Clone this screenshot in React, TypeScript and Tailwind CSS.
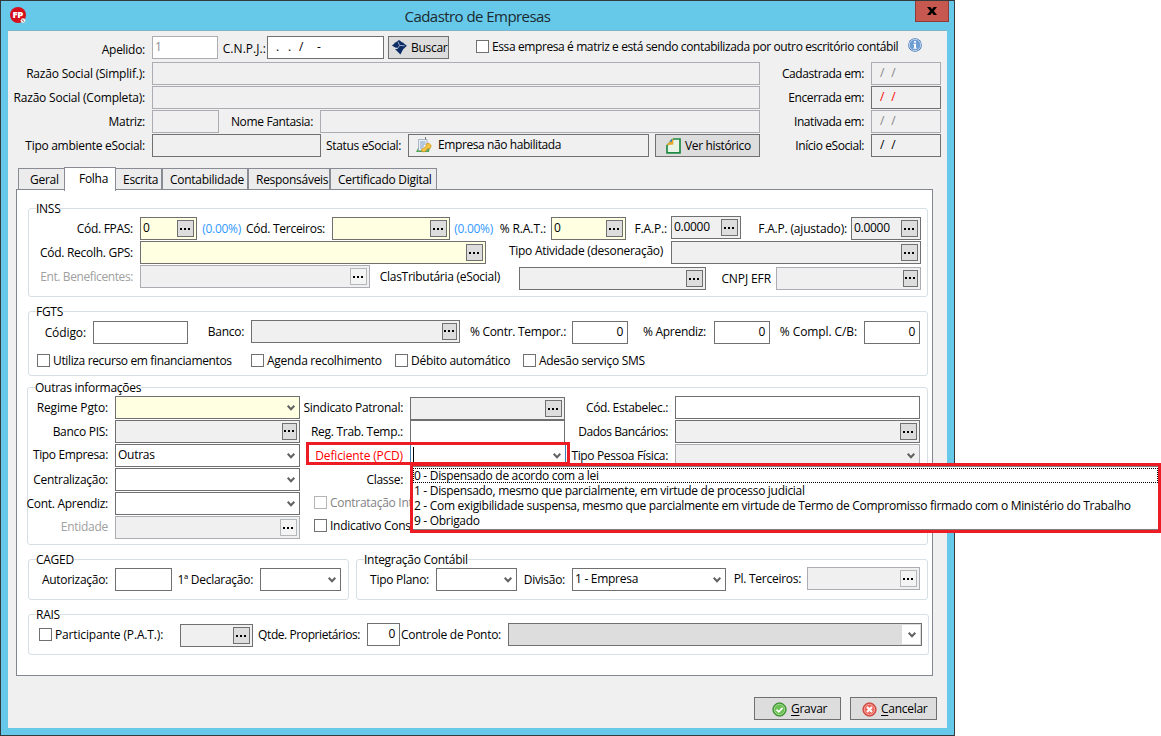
import type { ReactNode } from "react";
import clsx from "clsx";

const TABS = [
  { label: "Geral", className: "w-[47px] pl-[11px]" },
  { label: "Folha", className: "w-[52px] pl-[14px]", active: true },
  { label: "Escrita", className: "w-[47px] pl-[7px]" },
  { label: "Contabilidade", className: "w-[86px] pl-[7px]" },
  { label: "Responsáveis", className: "w-[82px] pl-[7px]" },
  { label: "Certificado Digital", className: "w-[107px] pl-[7px]" },
];

const PCD_OPTIONS = [
  "0 - Dispensado de acordo com a lei",
  "1 - Dispensado, mesmo que parcialmente, em virtude de processo judicial",
  "2 - Com exigibilidade suspensa, mesmo que parcialmente em virtude de Termo de Compromisso firmado com o Ministério do Trabalho",
  "9 - Obrigado",
];

export default function App() {
  return (
    <div className="relative h-[736px] w-[1161px] overflow-hidden bg-white font-['Open_Sans','Noto_Sans',sans-serif] text-[12px] tracking-[-0.28px] text-black">
      <div className="flex h-[736px] w-[955px] flex-col border border-[#34393c] bg-[#66c9ea]">
        <TitleBar />
        <main className="mx-[7px] flex h-[698px] flex-col border-t border-[#7fb4ca] bg-[#f0f0f0]">
          <CompanyHeader />
          <Tabs />
          <div className="relative ml-2 flex h-[487px] w-[917px] flex-col border border-[#828790] bg-white">
            <InssGroup />
            <FgtsGroup />
            <OtherInfoGroup />
            <div className="mt-[14px] ml-[11px] flex gap-[7px]">
              <CagedGroup />
              <IntegrationGroup />
            </div>
            <RaisGroup />
          </div>
          <footer className="mt-[21px] flex justify-end gap-[9px] pr-[10px]">
            <Button className="w-[87px] gap-[4px] pl-[17px]">
              <StatusIcon ok />
              <span><u className="underline-offset-2">G</u>ravar</span>
            </Button>
            <Button className="w-[87px] gap-[4px] pl-[11px]">
              <StatusIcon />
              <span><u className="underline-offset-2">C</u>ancelar</span>
            </Button>
          </footer>
        </main>
      </div>
      <PcdHighlight />
    </div>
  );
}

function TitleBar() {
  return (
    <header className="flex h-[29px] shrink-0 items-start">
      <div className="mt-[6px] ml-[9px] w-4">
        <AppIcon />
      </div>
      <h1 className="mt-[5px] flex-1 pl-[14px] text-center text-[15px] leading-5 tracking-[-0.55px] text-[#1c2a30]">
        Cadastro de Empresas
      </h1>
      <button
        type="button"
        aria-label="Fechar"
        className="mr-[5px] flex h-[21px] w-[34px] items-center justify-center border border-t-0 border-[#8e3a3a] bg-[#c75850]"
      >
        <svg width="10" height="8" viewBox="0 0 10 8">
          <path d="M0 0h3.4L5 2.3 6.6 0H10L6.8 4 10 8H6.6L5 5.7 3.4 8H0l3.2-4z" />
        </svg>
      </button>
    </header>
  );
}

function CompanyHeader() {
  return (
    <section className="flex h-[136px] flex-col pt-[5px]">
      <div className="flex h-[26px]">
        <Label className="mt-[2px] w-[144px]">Apelido:</Label>
        <Field className="w-[66px] text-[#8d8d8d]" border="light">1</Field>
        <Label className="mt-px w-[49px] !pr-[1px] tracking-[0.05px]">C.N.P.J.:</Label>
        <Field className="w-[117px]">
          <span className="flex pl-[6px]">
            <span className="w-3">.</span>
            <span className="w-[11px]">.</span>
            <span className="w-[18px]">/</span>
            <span>-</span>
          </span>
        </Field>
        <Button className="ml-1 w-[61px] gap-[4px] pl-[3px]">
          <SearchIcon />
          Buscar
        </Button>
        <Check className="mt-[4px] ml-[27px] w-[432px] tracking-[-0.395px]">
          Essa empresa é matriz e está sendo contabilizada por outro escritório contábil
        </Check>
        <div className="mt-[2px]">
          <InfoIcon />
        </div>
      </div>
      <div className="flex">
        <div className="flex w-[752px] flex-col gap-px">
          <div className="flex">
            <Label className="w-[144px] tracking-[-0.2px]">Razão Social (Simplif.):</Label>
            <Field className="flex-1" border="light" fill="gray" />
          </div>
          <div className="flex">
            <Label className="w-[144px] tracking-[-0.2px]">Razão Social (Completa):</Label>
            <Field className="flex-1" border="light" fill="gray" />
          </div>
          <div className="flex">
            <Label className="w-[144px]">Matriz:</Label>
            <Field className="w-[67px]" border="light" fill="gray" />
            <Label className="w-[101px] tracking-[-0.35px]">Nome Fantasia:</Label>
            <Field className="flex-1" border="light" fill="gray" />
          </div>
          <div className="flex">
            <Label className="w-[144px]">Tipo ambiente eSocial:</Label>
            <Field className="w-[169px]" fill="gray" />
            <Label className="w-[87px] tracking-[-0.35px]">Status eSocial:</Label>
            <Field className="w-[241px]" fill="gray">
              <span className="flex gap-[6px] pl-[5px] tracking-[-0.41px]">
                <ReportIcon />
                Empresa não habilitada
              </span>
            </Field>
            <Button className="ml-[6px] w-[105px] gap-[4px] pl-[10px] tracking-[-0.36px]">
              <SheetIcon />
              Ver histórico
            </Button>
          </div>
        </div>
        <div className="flex w-[181px] flex-col gap-px">
          <DateRow label="Cadastrada em:" border="light" className="h-[23px] text-[#858585]" />
          <DateRow label="Encerrada em:" className="h-[21px] text-[#f00]" />
          <DateRow label="Inativada em:" border="light" className="h-[23px] text-[#858585]" />
          <DateRow label="Início eSocial:" className="h-[23px]" />
        </div>
      </div>
    </section>
  );
}

function DateRow({ label, className, border }: { label: string; className?: string; border?: "light" }) {
  return (
    <div className="flex h-[23px]">
      <Label className="w-[111px] tracking-[-0.42px]">{label}</Label>
      <Field className={clsx("w-[70px]", className)} border={border} fill="gray">
        <span className="flex gap-[7px] pl-[6px]">
          <span>/</span>
          <span>/</span>
        </span>
      </Field>
    </div>
  );
}

function Tabs() {
  return (
    <nav className="z-10 -mb-[2px] ml-[10px] flex h-[24px] items-end pb-[1px]">
      {TABS.map((tab) => (
        <button
          key={tab.label}
          type="button"
          className={clsx(
            "shrink-0 border-[#8a8c95] text-left whitespace-nowrap",
            tab.className,
            tab.active
              ? "z-10 -mr-px -mb-px -ml-px h-[24px] border-x border-t bg-white pb-[2px]"
              : "mb-[1px] h-[21px] border-x border-t bg-[#ececec] pt-px",
          )}
        >
          {tab.label}
        </button>
      ))}
    </nav>
  );
}

function InssGroup() {
  return (
    <Group title="INSS" className="mt-[18px] ml-[11px] h-[89px] w-[900px]">
      <div className="flex h-6">
        <Label className="w-[111px]">Cód. FPAS:</Label>
        <Field className="w-[57px]" fill="yellow" dots>0</Field>
        <Label className="w-[44px] !pr-0 text-[#3399ff]">(0.00%)</Label>
        <Label className="w-[91px]">Cód. Terceiros:</Label>
        <Field className="w-[118px]" fill="yellow" dots />
        <Label className="w-[43px] !pr-0 text-[#3399ff]">(0.00%)</Label>
        <Label className="w-[58px] !pr-[5px] tracking-[-0.1px]">% R.A.T.:</Label>
        <Field className="w-[75px]" fill="yellow" dots>0</Field>
        <Label className="w-[45px] !pr-[4px] tracking-[-0.15px]">F.A.P.:</Label>
        <Field className="-mt-px w-[70px]" fill="gray" dots>0.0000</Field>
        <Label className="w-[110px] !pr-[4px] tracking-[-0.18px]">F.A.P. (ajustado):</Label>
        <Field className="w-[70px]" fill="gray" dots>0.0000</Field>
      </div>
      <div className="flex h-6">
        <Label className="w-[111px]">Cód. Recolh. GPS:</Label>
        <Field className="w-[346px]" fill="yellow" dots />
        <Label className="-mt-[2px] w-[185px] !pr-[8px]">Tipo Atividade (desoneração)</Label>
        <Field className="w-[250px]" fill="gray" dots />
      </div>
      <div className="flex h-6">
        <Label className="w-[111px] tracking-[-0.4px] text-[#a0a0a0]">Ent. Beneficentes:</Label>
        <Field className="w-[230px]" border="light" fill="gray" dots="light" />
        <Label className="w-[149px] !pr-[19px]">ClasTributária (eSocial)</Label>
        <Field className="mt-[2px] w-[187px]" fill="gray" dots />
        <Label className="mt-[2px] w-[70px] !pr-[5px] tracking-[-0.1px]">CNPJ EFR</Label>
        <Field className="mt-[2px] w-[145px]" border="light" fill="gray" dots="narrow" />
      </div>
    </Group>
  );
}

function FgtsGroup() {
  return (
    <Group title="FGTS" className="mt-[14px] ml-[11px] h-[65px] w-[900px]">
      <div className="flex h-6">
        <Label className="mt-px w-[64px] tracking-[-0.1px]">Código:</Label>
        <Field className="mt-px w-[95px]" />
        <Label className="w-[63px]">Banco:</Label>
        <Field className="w-[209px]" fill="gray" dots="narrow" />
        <Label className="w-[112px] !pr-[6px]">% Contr. Tempor.:</Label>
        <Field className="mt-px w-[56px] text-right">0</Field>
        <Label className="w-[86px] !pr-[8px]">% Aprendiz:</Label>
        <Field className="mt-px w-[56px] text-right">0</Field>
        <Label className="w-[94px] tracking-[-0.1px]">% Compl. C/B:</Label>
        <Field className="mt-px w-[56px] text-right">0</Field>
      </div>
      <div className="mt-[10px] ml-[8px] flex">
        <Check className="w-[214px] tracking-[-0.36px]">Utiliza recurso em financiamentos</Check>
        <Check className="w-[144px]">Agenda recolhimento</Check>
        <Check className="w-[128px]">Débito automático</Check>
        <Check>Adesão serviço SMS</Check>
      </div>
    </Group>
  );
}

function OtherInfoGroup() {
  return (
    <Group title="Outras informações" className="mt-[11px] ml-[10px] h-[158px] w-[901px]">
      <div className="flex">
        <div className="flex w-[272px] flex-col gap-px">
          <div className="flex">
            <Label className="w-[87px] tracking-[-0.15px]">Regime Pgto:</Label>
            <Field className="w-[185px]" fill="yellow" combo />
          </div>
          <div className="flex">
            <Label className="w-[87px]">Banco PIS:</Label>
            <Field className="w-[185px]" fill="gray" dots="narrow" />
          </div>
          <div className="flex h-[23px]">
            <Label className="-mt-px w-[87px] tracking-[-0.35px]">Tipo Empresa:</Label>
            <Field className="w-[185px]" combo>Outras</Field>
          </div>
          <div className="flex">
            <Label className="w-[87px]">Centralização:</Label>
            <Field className="w-[185px]" combo />
          </div>
          <div className="flex">
            <Label className="w-[87px]">Cont. Aprendiz:</Label>
            <Field className="w-[185px]" combo />
          </div>
          <div className="flex h-[23px]">
            <Label className="-mt-px w-[87px] text-[#a0a0a0]">Entidade</Label>
            <Field className="w-[185px]" border="light" fill="gray" dots="light" />
          </div>
        </div>
        <div className="flex w-[265px] flex-col gap-px">
          <div className="flex h-[23px]">
            <Label className="w-[110px]">Sindicato Patronal:</Label>
            <Field className="mt-px w-[155px]" fill="gray" dots />
          </div>
          <div className="flex">
            <Label className="w-[110px]">Reg. Trab. Temp.:</Label>
            <Field className="w-[155px]" />
          </div>
          <div className="flex">
            <Label className="w-[110px] tracking-[-0.15px] text-[#f00]">Deficiente (PCD)</Label>
            <Field className="w-[156px]" border="focus" combo>
              <span className="block h-[17px] w-px translate-y-[2px] bg-black" />
            </Field>
          </div>
          <Label className="w-[110px]">Classe:</Label>
          <Check className="mt-[4px] ml-[14px] w-[96px]" disabled>Contratação Int</Check>
          <Check className="mt-[9px] ml-[14px] w-[96px]">Indicativo Cons</Check>
        </div>
        <div className="flex w-[355px] flex-col gap-px">
          <div className="flex">
            <Label className="w-[110px] tracking-[-0.35px]">Cód. Estabelec.:</Label>
            <Field className="w-[245px]" />
          </div>
          <div className="flex">
            <Label className="w-[110px] tracking-[-0.45px]">Dados Bancários:</Label>
            <Field className="w-[245px]" fill="gray" dots />
          </div>
          <div className="flex">
            <Label className="w-[110px] tracking-[-0.35px]">Tipo Pessoa Física:</Label>
            <Field className="w-[245px]" border="light" fill="gray" combo />
          </div>
        </div>
      </div>
    </Group>
  );
}

function CagedGroup() {
  return (
    <Group title="CAGED" className="h-[41px] w-[321px]">
      <div className="flex">
        <Label className="w-[86px]">Autorização:</Label>
        <Field className="w-[57px]" />
        <Label className="w-[88px]">1ª Declaração:</Label>
        <Field className="w-[81px]" combo />
      </div>
    </Group>
  );
}

function IntegrationGroup() {
  return (
    <Group title="Integração Contábil" className="h-[41px] w-[572px]">
      <div className="flex">
        <Label className="w-[79px]">Tipo Plano:</Label>
        <Field className="w-[81px]" combo />
        <Label className="w-[55px] !pr-[7px]">Divisão:</Label>
        <Field className="w-[154px]" combo>1 - Empresa</Field>
        <Label className="-mt-px w-[81px] !pr-[6px]">Pl. Terceiros:</Label>
        <Field className="-mt-px w-[113px]" border="light" fill="gray" dots="light" />
      </div>
    </Group>
  );
}

function RaisGroup() {
  return (
    <Group title="RAIS" className="mt-[14px] ml-[11px] h-[41px] w-[901px]">
      <div className="flex">
        <Check className="mt-[5px] ml-[10px] w-[141px] tracking-[-0.15px]">Participante (P.A.T.):</Check>
        <Field className="mt-px w-[73px]" fill="gray" dots />
        <Label className="w-[114px] tracking-[-0.42px]">Qtde. Proprietários:</Label>
        <Field className="w-[33px] text-right">0</Field>
        <Label className="w-[108px]">Controle de Ponto:</Label>
        <Field className="w-[414px]" fill="dark" combo />
      </div>
    </Group>
  );
}

// red frame around the PCD combo plus its open list
function PcdHighlight() {
  return (
    <>
      <div className="pointer-events-none absolute top-[442px] left-[306px] h-[23px] w-[264px] border-[3px] border-[#ed1c24]" />
      <div className="absolute top-[463px] left-[410px] h-[70px] w-[751px] border-[3px] border-[#ed1c24] bg-white">
        <ul className="h-[64px] border-y border-[#7f7f7f] pt-px leading-[15px] tracking-[-0.305px]">
          {PCD_OPTIONS.map((option, index) => (
            <li
              key={option}
              className={clsx(
                "h-[15px] pl-px whitespace-nowrap",
                index === 0 && "outline-1 -outline-offset-1 outline-black outline-dotted",
              )}
            >
              {option}
            </li>
          ))}
        </ul>
      </div>
    </>
  );
}

function Group({ title, className, children }: { title: string; className?: string; children: ReactNode }) {
  return (
    <section className={clsx("flex shrink-0 flex-col rounded-[3px] border border-[#d5dfe5]", className)}>
      <h2 className="-mt-[8px] ml-[7px] h-4 w-fit bg-white leading-4 whitespace-nowrap">{title}</h2>
      {children}
    </section>
  );
}

function Label({ className, children }: { className?: string; children: ReactNode }) {
  return (
    <span
      className={clsx(
        "flex h-[23px] shrink-0 justify-end pr-[7px] leading-[23px] whitespace-nowrap",
        className,
      )}
    >
      {children}
    </span>
  );
}

const FILLS = {
  white: "bg-white",
  gray: "bg-[#f0f0f0]",
  yellow: "bg-[#ffffe1]",
  dark: "bg-[#dddddd]",
};

const BORDERS = {
  normal: "border-[#707070]",
  light: "border-[#abadb3]",
  focus: "border-[#3c7fb1]",
};

function Field({
  className,
  fill = "white",
  border = "normal",
  dots,
  combo,
  children,
}: {
  className?: string;
  fill?: keyof typeof FILLS;
  border?: keyof typeof BORDERS;
  dots?: boolean | "light" | "narrow";
  combo?: boolean;
  children?: ReactNode;
}) {
  return (
    <div className={clsx("flex h-[23px] shrink-0 border leading-[19px]", FILLS[fill], BORDERS[border], className)}>
      <div className="min-w-0 flex-1 pr-[4px] pl-[2px] whitespace-nowrap">{children}</div>
      {dots && (
        <button
          type="button"
          aria-label="Pesquisar"
          className={clsx(
            "mt-[2px] mr-[2px] flex h-[17px] shrink-0 gap-[2px] border",
            dots === "narrow" ? "w-[15px] pt-[6px] pl-px" : "w-[17px] pt-[7px] pl-[2px]",
            dots === "light" ? "border-[#b5b8ba] bg-[#f4f4f4]" : "border-[#707070] bg-[#dddddd]",
          )}
        >
          <i className="h-[2px] w-[2px] bg-black" />
          <i className="h-[2px] w-[2px] bg-black" />
          <i className="h-[2px] w-[2px] bg-black" />
        </button>
      )}
      {combo && (
        <span
          className={clsx(
            "my-px flex w-[18px] shrink-0 items-center justify-center pl-[2px]",
            fill === "dark" && "mr-px bg-white",
          )}
        >
          <svg width="8" height="6" viewBox="0 0 8 6" fill="none">
            <path d="M0.7 0.8L4 4.2L7.3 0.8" stroke="#606060" strokeWidth="2" />
          </svg>
        </span>
      )}
    </div>
  );
}

function Check({ className, disabled, children }: { className?: string; disabled?: boolean; children: ReactNode }) {
  return (
    <label
      className={clsx(
        "flex h-[13px] shrink-0 gap-[3px] leading-[13px] whitespace-nowrap",
        disabled && "text-[#838383]",
        className,
      )}
    >
      <span
        className={clsx("h-[13px] w-[13px] shrink-0 border bg-white", disabled ? "border-[#b5b5b5]" : "border-[#707070]")}
      />
      {children}
    </label>
  );
}

function Button({ className, children }: { className?: string; children: ReactNode }) {
  return (
    <button
      type="button"
      className={clsx(
        "flex h-[23px] shrink-0 items-center border border-[#707070] bg-[#dddddd] leading-[21px] whitespace-nowrap",
        className,
      )}
    >
      {children}
    </button>
  );
}

function AppIcon() {
  return (
    <svg width="16" height="17" viewBox="0 0 16 17">
      <circle cx="8" cy="8" r="8" fill="#d5101c" />
      <text x="7.8" y="11.4" textAnchor="middle" fontSize="9.5" fontWeight="800" letterSpacing="-0.3" fill="#fff">
        FP
      </text>
      <circle cx="13" cy="13.6" r="2.4" fill="#eee" />
      <path d="M11.6 12.3l2.6 2.4" stroke="#a33" strokeWidth="0.9" />
    </svg>
  );
}

function SearchIcon() {
  return (
    <svg className="shrink-0" width="15" height="15" viewBox="0 0 15 15">
      <path d="M7 0l3.4 2.4-2.9 2.7L3.6 2.6zM11 2.8l3.9 3-2.9 2.6-3.7-2.8zM3 3.1l3.6 2.5-3 2.3L0 5.4zM7.6 6.3l3.7 2.7-2.9 5.4L3 8.9h3.2z" fill="#0c2d66" />
      <path d="M2.6 2.6h8.6l1 5.6-4.4 3.4L4 7z" fill="#0c2d66" />
      <path d="M1 7.2l4.2 1.6 2.5-3.2M6 1.8l1.6 3.6 5 .4" fill="none" stroke="#dbe3ee" strokeWidth="0.7" />
    </svg>
  );
}

function InfoIcon() {
  return (
    <svg width="14" height="14" viewBox="0 0 14 14">
      <circle cx="7" cy="7" r="6.8" fill="#3f74b5" />
      <circle cx="7" cy="7" r="5.7" fill="#6d9dd3" stroke="#c5d9ee" strokeWidth="0.9" />
      <path d="M6.1 3h1.9v1.7H6.1zM5.4 5.8H8v4h.8v1H5.3v-1h.8V6.8h-.7z" fill="#fff" />
    </svg>
  );
}

function ReportIcon() {
  return (
    <svg className="mt-[2px] shrink-0" width="16" height="16" viewBox="0 0 16 16">
      <path d="M0 15l2.6-5H14l-1 5z" fill="#53a653" />
      <path d="M2.5 2.5h8.5v11H2.5z" fill="#edf2f8" stroke="#93a5b8" strokeWidth="0.8" />
      <path d="M4 5h5.5M4 7h5.5M4 9h4M4 11h3" stroke="#7d9cc0" />
      <path d="M9 0h1v2.5H9z" fill="#777" />
      <path d="M6 14.5l-.6-2 4.5-2.8.4-2.9 2.7-.5 2.2 2.3-1 2.8-2.8.4-3 3.2z" fill="#f4c544" stroke="#c58e1b" strokeWidth="0.7" />
    </svg>
  );
}

function SheetIcon() {
  return (
    <svg className="shrink-0" width="15" height="16" viewBox="0 0 15 16">
      <path d="M1 14.9V7.5L7.5 1H14v13.9z" fill="#eaf4e6" stroke="#1f8a43" strokeWidth="1.7" />
      <path d="M0.4 7.2L7.4.2v6.4z" fill="#e7a92c" />
      <path d="M3.4 3.3L6 .8v3.3z" fill="#2c7fb8" />
    </svg>
  );
}

function StatusIcon({ ok }: { ok?: boolean }) {
  return (
    <svg className="mt-px shrink-0" width="15" height="15" viewBox="0 0 15 15">
      <circle cx="7.5" cy="7.5" r="6.7" fill={ok ? "#4fa83c" : "#e0493f"} stroke={ok ? "#2f8127" : "#c1443c"} strokeWidth="0.8" />
      <circle cx="7.5" cy="7.5" r="5.2" fill={ok ? "#6cc054" : "#ee6b60"} stroke={ok ? "#b5dfa8" : "#f6b5ae"} strokeWidth="0.8" />
      {ok ? (
        <path d="M4.5 7.6l2.2 2.2 3.9-4" fill="none" stroke="#fff" strokeWidth="1.8" />
      ) : (
        <path d="M5 5l5 5M10 5l-5 5" stroke="#fff" strokeWidth="2" />
      )}
    </svg>
  );
}
